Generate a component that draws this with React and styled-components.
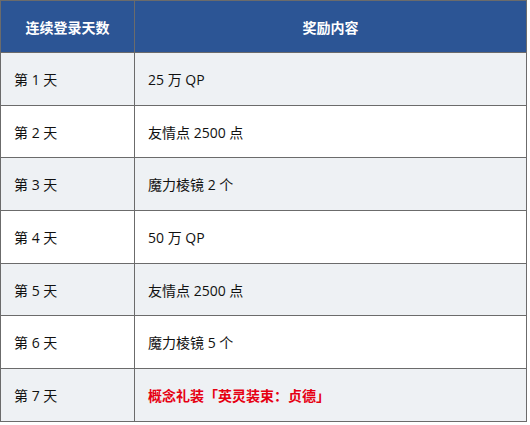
import React from 'react'
import styled, { createGlobalStyle } from 'styled-components'

const HeaderColor = '#2c5595'
const LineColor = '#6b6b6b'
const fontFamily = '"Open Sans", "Noto Sans CJK SC", "Noto Sans", sans-serif'

const GlobalStyle = createGlobalStyle`
  html, body {
    margin:0;
    padding:0;
    background:#ffffff;
  }
`

const Table = styled.table`
  border-collapse:collapse;
  width:527px;
  table-layout:fixed;
  font-family:${fontFamily};
  font-size:14px;
  color:#111;
`

const HeadCell = styled.th`
  height:51px;
  padding:0;
  background:${HeaderColor};
  color:#fff;
  font-weight:bold;
  text-align:center;
  border:1px solid ${LineColor};
  width:${props => props.width || 'auto'};
`

const Row = styled.tr`
  background:${props => props.striped ? '#eef1f4' : '#ffffff'};
`

const Cell = styled.td`
  height:51.7px;
  padding:0 0 0 13px;
  border:1px solid ${LineColor};
  vertical-align:middle;
  color:${props => props.highlight ? '#e60012' : '#111'};
  font-weight:${props => props.highlight ? 'bold' : 'normal'};
`

const rewards = [
  { day:'第 1 天', reward:'25 万 QP' },
  { day:'第 2 天', reward:'友情点 2500 点' },
  { day:'第 3 天', reward:'魔力棱镜 2 个' },
  { day:'第 4 天', reward:'50 万 QP' },
  { day:'第 5 天', reward:'友情点 2500 点' },
  { day:'第 6 天', reward:'魔力棱镜 5 个' },
  { day:'第 7 天', reward:'概念礼装「英灵装束：贞德」', highlight:true },
]

export default function App(){
  return(
    <>
      <GlobalStyle />
      <Table>
        <thead>
          <tr>
            <HeadCell width="133px">连续登录天数</HeadCell>
            <HeadCell>奖励内容</HeadCell>
          </tr>
        </thead>
        <tbody>
          {rewards.map((each, index)=>(
            <Row key={index} striped={index % 2 === 0}>
              <Cell>{each.day}</Cell>
              <Cell highlight={each.highlight}>{each.reward}</Cell>
            </Row>
          ))}
        </tbody>
      </Table>
    </>
  )
}
